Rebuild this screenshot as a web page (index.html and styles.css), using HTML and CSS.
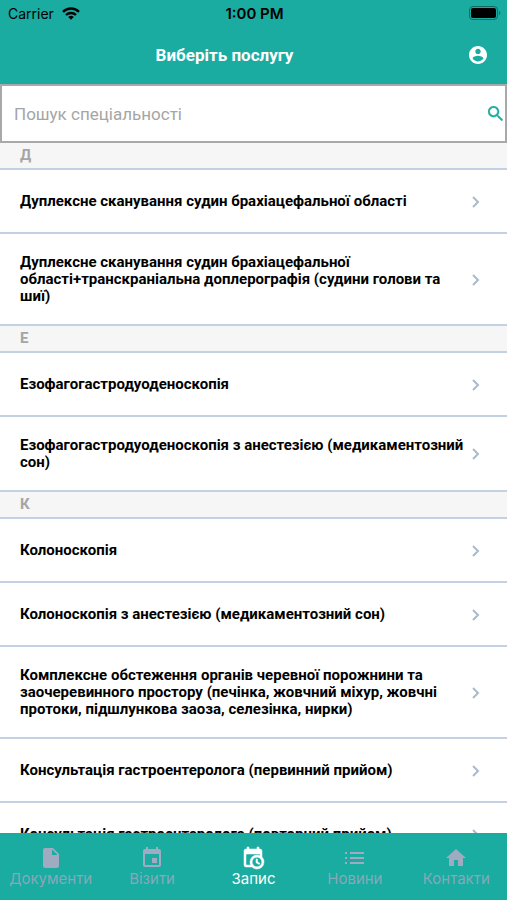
FILE: index.html
```html
<!DOCTYPE html>
<html lang="uk">

<head>
    <meta charset="UTF-8">
    <meta name="viewport" content="width=device-width, initial-scale=1.0">
    <title>Виберіть послугу</title>
    <link rel="stylesheet" href="styles.css">
</head>

<body>
    <header>
        <div class="status">
            <div class="carrier">
                <span>Carrier</span>
                <svg width="18" height="13" viewBox="0 0 18 13" fill="none" stroke="#000" stroke-width="2.4">
                    <path d="M1 4.8a11.5 11.5 0 0 1 16 0" />
                    <path d="M4 8a7.2 7.2 0 0 1 10 0" />
                    <path d="M9 12.8L6.2 10a4 4 0 0 1 5.6 0z" fill="#000" stroke="none" />
                </svg>
            </div>
            <time class="time">1:00 PM</time>
            <div class="battery">
                <svg width="32" height="14" viewBox="0 0 32 14">
                    <rect x="0.5" y="0.5" width="28" height="13" rx="3.5" fill="none" stroke="#0f6b65" />
                    <rect x="2" y="2" width="25" height="10" rx="2" fill="#000" />
                    <path d="M30 5a2.2 2.2 0 0 1 0 4z" fill="#0f6b65" />
                </svg>
            </div>
        </div>
        <div class="title_bar">
            <h1>Виберіть послугу</h1>
            <button class="profile" type="button" aria-label="Профіль">
                <svg width="18" height="18" viewBox="2 2 20 20" fill="#fff">
                    <path d="M12 2C6.48 2 2 6.48 2 12s4.48 10 10 10 10-4.48 10-10S17.52 2 12 2zm0 3c1.66 0 3 1.34 3 3s-1.34 3-3 3-3-1.34-3-3 1.34-3 3-3zm0 14.2c-2.5 0-4.71-1.28-6-3.22.03-1.99 4-3.08 6-3.08 1.99 0 5.97 1.09 6 3.08-1.29 1.94-3.5 3.22-6 3.22z" />
                </svg>
            </button>
        </div>
    </header>

    <form class="search">
        <input type="text" placeholder="Пошук спеціальності" aria-label="Пошук спеціальності">
        <button type="submit" aria-label="Шукати">
            <svg width="15" height="15" viewBox="3 3 17.5 17.5" fill="#1aaba1" stroke="#1aaba1" stroke-width="0.4">
                <path d="M15.5 14h-.79l-.28-.27A6.471 6.471 0 0 0 16 9.5 6.5 6.5 0 1 0 9.5 16c1.61 0 3.09-.59 4.23-1.57l.27.28v.79l5 4.99L20.49 19l-4.99-5zm-6 0C7.01 14 5 11.99 5 9.5S7.01 5 9.5 5 14 7.01 14 9.5 11.99 14 9.5 14z" />
            </svg>
        </button>
    </form>

    <main class="list"></main>

    <nav class="tabs">
        <a href="#documents">
            <svg width="24" height="24" viewBox="0 0 24 24">
                <path d="M6 2c-1.1 0-2 .9-2 2v16c0 1.1.9 2 2 2h12c1.1 0 2-.9 2-2V8l-6-6H6zm7 7V3.500L18.500 9H13z" />
            </svg>
            <span>Документи</span>
        </a>
        <a href="#visits">
            <svg width="24" height="24" viewBox="0 0 24 24">
                <path d="M17 12h-5v5h5v-5zM16 1v2H8V1H6v2H5c-1.11 0-2 .9-2 2v14c0 1.1.89 2 2 2h14c1.1 0 2-.9 2-2V5c0-1.1-.9-2-2-2h-1V1h-2zm3 18H5V8h14v11z" />
            </svg>
            <span>Візити</span>
        </a>
        <a href="#booking" class="active">
            <svg width="24" height="24" viewBox="0 0 24 24" stroke="#fff" stroke-width="0.5">
                <path d="M15 13h1.5v2.82l2.44 1.41-.75 1.3L15 16.69V13m4-5H5v11h4.67c-.43-.91-.67-1.93-.67-3a7 7 0 0 1 7-7c1.07 0 2.09.24 3 .67V8M5 21a2 2 0 0 1-2-2V5c0-1.11.89-2 2-2h1V1h2v2h8V1h2v2h1a2 2 0 0 1 2 2v6.1c1.24 1.26 2 2.99 2 4.9a7 7 0 0 1-7 7c-1.91 0-3.64-.76-4.9-2H5m11-9.85A4.85 4.85 0 0 0 11.15 16c0 2.68 2.17 4.85 4.85 4.85A4.85 4.85 0 0 0 20.85 16c0-2.68-2.17-4.85-4.85-4.85z" />
            </svg>
            <span>Запис</span>
        </a>
        <a href="#news">
            <svg width="24" height="24" viewBox="0 0 24 24">
                <path d="M2 6h2v2H2zM2 11h2v2H2zM2 16h2v2H2zM7 6h14v2H7zM7 11h14v2H7zM7 16h14v2H7z" />
            </svg>
            <span>Новини</span>
        </a>
        <a href="#contacts">
            <svg width="24" height="24" viewBox="0 0 24 24">
                <path d="M10 20v-6h4v6h5v-8h3L12 3 2 12h3v8z" />
            </svg>
            <span>Контакти</span>
        </a>
    </nav>

    <script src="main.js"></script>
</body>

</html>
```

FILE: styles.css
```css
* {
    box-sizing: border-box;
    margin: 0;
    padding: 0;
}

body {
    display: flex;
    flex-direction: column;
    height: 100vh;
    background: #fff;
    font-family: Roboto, "Noto Sans", sans-serif;
}

button {
    border: none;
    background: none;
    cursor: pointer;
}

svg {
    display: block;
}

header {
    background: #1aaba1;
}

.status {
    display: grid;
    grid-template-columns: 1fr auto 1fr;
    align-items: center;
    height: 26px;
    padding: 0 6px 0 8px;
    font-family: Inter, sans-serif;
    font-size: 14px;
}

.carrier {
    display: flex;
    align-items: center;
    gap: 8px;
}

.time {
    font-size: 15px;
    font-weight: 600;
}

.battery {
    justify-self: end;
}

.title_bar {
    display: flex;
    align-items: center;
    height: 58px;
    padding-right: 20px;
}

.title_bar h1 {
    flex: 1;
    color: #fff;
    font-size: 17px;
    line-height: 20px;
    text-align: center;
}

.profile {
    width: 38px;
    padding-left: 20px;
}

.search {
    display: flex;
    align-items: center;
    height: 59px;
    border: 2px solid #a9a9a9;
}

.search input {
    flex: 1;
    min-width: 0;
    height: 100%;
    padding: 0 12px;
    border: none;
    outline: none;
    background: none;
    font-family: inherit;
    font-size: 17px;
}

.search input::placeholder {
    color: #a5a5a5;
}

.search button {
    padding: 0 2px;
}

.list {
    flex: 1;
    min-height: 0;
    overflow-y: auto;
    scrollbar-width: none;
}

.list h2 {
    height: 27px;
    padding-left: 20px;
    border-bottom: 2px solid #c3d1e2;
    background: #f6f6f6;
    color: #a5a5a5;
    font-size: 15px;
    line-height: 25px;
}

.list a {
    display: flex;
    align-items: center;
    justify-content: space-between;
    min-height: 64px;
    padding: 20px 25px 19px 20px;
    border-bottom: 2px solid #c3d1e2;
    color: #000;
    font-size: 15px;
    font-weight: 700;
    line-height: 17px;
    text-decoration: none;
}

.list span {
    max-width: 446px;
}

.list svg {
    flex-shrink: 0;
}

.tabs {
    display: grid;
    grid-template-columns: repeat(5, 1fr);
    height: 67px;
    background: #1aaba1;
}

.tabs a {
    display: flex;
    flex-direction: column;
    align-items: center;
    padding-top: 13px;
    color: #86a9b9;
    font-family: Inter, sans-serif;
    font-size: 15px;
    line-height: 18px;
    text-decoration: none;
}

.tabs svg {
    fill: #a0aac0;
}

.tabs .active {
    color: #fff;
}

.tabs .active svg {
    fill: #fff;
}
```

FILE: main.js
```js
let data = [{
    letter: 'Д',
    services: [
        'Дуплексне сканування судин брахіацефальної області',
        'Дуплексне сканування судин брахіацефальної області+транскраніальна доплерографія (судини голови та шиї)'
    ]
}, {
    letter: 'Е',
    services: [
        'Езофагогастродуоденоскопія',
        'Езофагогастродуоденоскопія з анестезією (медикаментозний сон)'
    ]
}, {
    letter: 'К',
    services: [
        'Колоноскопія',
        'Колоноскопія з анестезією (медикаментозний сон)',
        'Комплексне обстеження органів черевної порожнини та заочеревинного простору (печінка, жовчний міхур, жовчні протоки, підшлункова заоза, селезінка, нирки)',
        'Консультація гастроентеролога (первинний прийом)',
        'Консультація гастроентеролога (повторний прийом)'
    ]
}];
let list = document.querySelector('.list');
let arrow = '<svg width="12" height="14" viewBox="0 0 12 14" fill="none" stroke="#aabace" stroke-width="2"><path d="M3 2l5 5-5 5"/></svg>';

data.forEach((group) => {
    let title = document.createElement('h2');
    title.textContent = group.letter;
    list.appendChild(title);
    group.services.forEach((name) => {
        let link = document.createElement('a');
        link.href = '#service';
        link.innerHTML = '<span>' + name + '</span>' + arrow;
        list.appendChild(link);
    });
});
```
